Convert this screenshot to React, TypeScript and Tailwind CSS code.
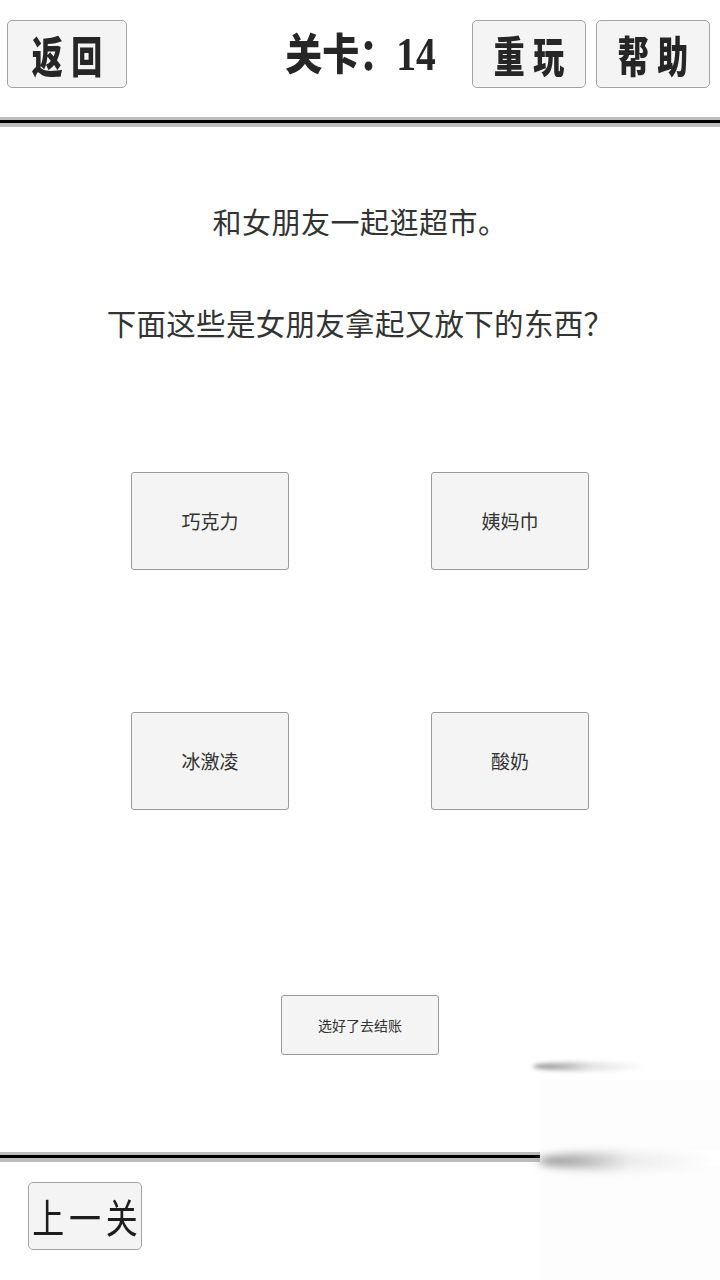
import React from "react";

const cjk = "font-['Noto_Sans_CJK_SC','Noto_Sans',sans-serif]";

function HeadButton({ label, className = "" }: { label: string; className?: string }) {
  return (
    <button
      type="button"
      className={`flex h-[68px] items-center justify-center rounded-[5px] border border-[#a3a3a3] bg-[#f4f4f4] text-[#262626] ${className}`}
    >
      <span className={`${cjk} inline-block scale-x-[0.72] whitespace-nowrap pl-[12px] text-[43px] font-black leading-none tracking-[12px]`}>
        {label}
      </span>
    </button>
  );
}

function Choice({ label }: { label: string }) {
  return (
    <button
      type="button"
      className={`${cjk} flex h-[98px] w-[158px] items-center justify-center rounded-[3px] border border-[#9a9a9a] bg-[#f4f4f4] text-[19px] text-[#333]`}
    >
      {label}
    </button>
  );
}

function Divider() {
  return (
    <div className="flex flex-col">
      <div className="h-[3px] bg-[#bdbdbd]" />
      <div className="h-[3px] bg-black" />
      <div className="h-[4px] bg-[#bdbdbd]" />
    </div>
  );
}

export default function App() {
  return (
    <div className="relative flex h-[1280px] w-[720px] flex-col overflow-hidden bg-white">
      {/* Header */}
      <header className="grid h-[117px] grid-cols-[1fr_auto_1fr] items-start pt-[20px]">
        <div className="flex pl-[7px]">
          <HeadButton label="返回" className="w-[120px]" />
        </div>
        <div className={`${cjk} flex h-[68px] items-center text-[#262626]`}>
          <span className="inline-block scale-x-[0.86] whitespace-nowrap text-[43px] font-black leading-none">
            关卡：<span className="font-['Liberation_Serif',serif] text-[46px] font-bold">14</span>
          </span>
        </div>
        <div className="flex justify-end gap-[10px] pr-[10px]">
          <HeadButton label="重玩" className="w-[114px]" />
          <HeadButton label="帮助" className="w-[114px]" />
        </div>
      </header>

      <Divider />

      {/* Question */}
      <main className={`${cjk} flex h-[1025px] flex-col items-center text-[#333]`}>
        <p className="mt-[80px] text-[29px] leading-[29px] tracking-[0.5px]">和女朋友一起逛超市。</p>
        <p className="mt-[71px] text-[29.5px] leading-[30px] tracking-[0.3px]">下面这些是女朋友拿起又放下的东西？</p>

        <div className="mt-[135px] grid grid-cols-[158px_158px] gap-x-[142px] gap-y-[142px]">
          <Choice label="巧克力" />
          <Choice label="姨妈巾" />
          <Choice label="冰激凌" />
          <Choice label="酸奶" />
        </div>

        <button
          type="button"
          className="mt-[185px] flex h-[60px] w-[158px] items-center justify-center rounded-[3px] border border-[#9a9a9a] bg-[#f4f4f4] text-[14px] text-[#333]"
        >
          选好了去结账
        </button>
      </main>

      <Divider />

      {/* Footer */}
      <footer className="flex flex-1 items-start pl-[28px] pt-[20px]">
        <button
          type="button"
          className="flex h-[68px] w-[114px] items-center justify-center rounded-[5px] border border-[#a3a3a3] bg-[#f4f4f4] text-[#1e1e1e]"
        >
          <span className={`${cjk} inline-block scale-x-[0.8] whitespace-nowrap pl-[6px] text-[40px] leading-none tracking-[6px]`}>
            上一关
          </span>
        </button>
      </footer>

      {/* smudges at bottom right */}
      <div className="pointer-events-none absolute left-[540px] top-[1080px] h-[200px] w-[180px] bg-[#fdfdfd]" />
      <div className="pointer-events-none absolute left-[540px] top-[1150px] h-[16px] w-[180px] bg-gradient-to-r from-[#fdfdfd] to-white" />
      <div className="pointer-events-none absolute left-[533px] top-[1062px] h-[9px] w-[115px] rounded-[50%] bg-gradient-to-r from-[#8c8c8c] via-[#e4e4e4] to-transparent blur-[2px]" />
      <div className="pointer-events-none absolute left-[538px] top-[1152px] h-[18px] w-[182px] rounded-[50%] bg-gradient-to-r from-[#8a8a8a] via-[#ececec] to-transparent blur-[4px]" />
    </div>
  );
}
